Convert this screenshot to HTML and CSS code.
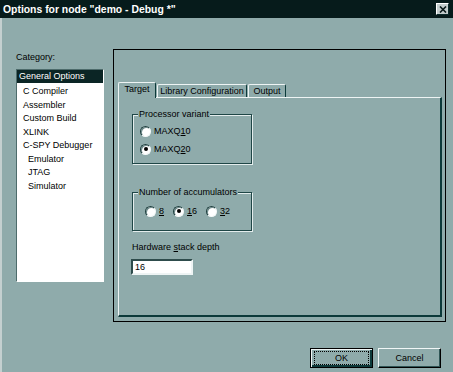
FILE: index.html
```html
<!DOCTYPE html>
<html>
<head>
<meta charset="utf-8">
<link rel="stylesheet" href="styles.css">
</head>
<body>
<div class="titlebar">
  <span class="title">Options for node "demo - Debug *"</span>
  <span class="close"><svg width="8" height="7" viewBox="0 0 8 7"><path d="M1 0.5 L7 6.5 M7 0.5 L1 6.5" stroke="#0a1a1a" stroke-width="1.6"/></svg></span>
</div>
<div class="client">
  <div class="main">
    <div class="left">
      <div class="cat-label">Category:</div>
      <ul class="list">
        <li class="item sel">General Options</li>
        <li class="item">C Compiler</li>
        <li class="item">Assembler</li>
        <li class="item">Custom Build</li>
        <li class="item">XLINK</li>
        <li class="item">C-SPY Debugger</li>
        <li class="item sub">Emulator</li>
        <li class="item sub">JTAG</li>
        <li class="item sub">Simulator</li>
      </ul>
    </div>
    <div class="frame">
      <div class="tabs">
        <div class="tab active tab-target">Target</div>
        <div class="tab tab-lib">Library Configuration</div>
        <div class="tab tab-out">Output</div>
      </div>
      <div class="panel">
        <div class="group g1">
          <span class="legend">Processor variant</span>
          <div class="radio"><span class="dot"></span><span>MAXQ<u>1</u>0</span></div>
          <div class="radio"><span class="dot on"></span><span>MAXQ<u>2</u>0</span></div>
        </div>
        <div class="group g2">
          <span class="legend">Number of accumulators</span>
          <div class="radio r-inline"><span class="dot"></span><span><u>8</u></span></div>
          <div class="radio r-inline"><span class="dot on"></span><span><u>1</u>6</span></div>
          <div class="radio r-inline"><span class="dot"></span><span><u>3</u>2</span></div>
        </div>
        <div class="field-label">Hardware <u>s</u>tack depth</div>
        <div class="textbox">16</div>
      </div>
    </div>
  </div>
  <div class="buttons">
    <div class="btn default"><span class="focus">OK</span></div>
    <div class="btn">Cancel</div>
  </div>
</div>
</body>
</html>
```
FILE: styles.css
```css
* { box-sizing: border-box; }
html, body { margin: 0; padding: 0; }
body {
  width: 453px;
  height: 372px;
  overflow: hidden;
  background: #8fabab;
  font-family: "Liberation Sans", Arial, sans-serif;
  font-size: 9px;
  color: #000;
}
u { text-decoration: underline; text-underline-offset: 1px; }

.titlebar {
  height: 18px;
  background: #061b1b;
  color: #fff;
  display: flex;
  align-items: center;
  justify-content: space-between;
  padding: 0 4px 0 3px;
}
.title { font-weight: bold; font-size: 10.4px; white-space: nowrap; }
.close {
  width: 13px;
  height: 12px;
  background: #c3cdcd;
  border: 1px solid;
  border-color: #fff #0a2a2a #0a2a2a #fff;
  display: flex;
  align-items: center;
  justify-content: center;
}

.client {
  height: 354px;
  border-left: 2px solid #c4d0d0;
  display: flex;
  flex-direction: column;
}
.main {
  display: flex;
  padding: 31px 0 0 14px;
}
.left { width: 88px; padding-top: 3px; }
.cat-label { height: 11px; line-height: 11px; }
.list {
  margin: 6px 0 0;
  padding: 0;
  list-style: none;
  background: #fff;
  height: 213px;
  border: 1px solid;
  border-color: #4d6b6b #fff #fff #4d6b6b;
}
.item {
  height: 13.5px;
  line-height: 13.5px;
  padding-left: 6px;
  white-space: nowrap;
}
.item.sel {
  background: #0b2525;
  color: #fff;
  padding-left: 2px;
  height: 13px;
  line-height: 13px;
  margin-bottom: 2px;
}
.item.sub { padding-left: 11px; }

.frame {
  margin-left: 9px;
  width: 333px;
  height: 273px;
  border: 1px solid #000;
  padding: 32px 3px 4px 4px;
}
.tabs {
  display: flex;
  align-items: flex-end;
  height: 15px;
}
.tab {
  height: 13px;
  line-height: 12px;
  text-align: center;
  white-space: nowrap;
  border-top: 1px solid #eef4f4;
  border-left: 1px solid #eef4f4;
  border-right: 1px solid #0c3a3a;
  border-radius: 2px 2px 0 0;
}
.tab.active {
  height: 16px;
  line-height: 13px;
  margin-bottom: -1px;
  position: relative;
  z-index: 1;
  background: #8fabab;
}
.tab-target { width: 38px; }
.tab-lib { width: 90px; margin-left: 1px; }
.tab-out { width: 38px; margin-left: 1px; }

.panel {
  width: 324px;
  height: 220px;
  border-style: solid;
  border-width: 1px 2px 2px 1px;
  border-color: #eef4f4 #0c3a3a #0c3a3a #eef4f4;
  padding: 16px 0 0 13px;
}
.group {
  position: relative;
  width: 120px;
  border: 1px solid #1f4646;
  box-shadow: 1px 1px 0 #e4eded, inset 1px 1px 0 #e4eded;
}
.legend {
  position: absolute;
  top: -6px;
  left: 5px;
  padding: 0 1px;
  line-height: 11px;
  background: #8fabab;
  white-space: nowrap;
}
.g1 { height: 50px; padding: 7px 0 0 7px; }
.g2 {
  height: 39px;
  margin-top: 28px;
  padding: 9px 0 0 12px;
  display: flex;
}
.radio {
  display: flex;
  align-items: center;
  height: 18px;
  gap: 3px;
}
.r-inline { margin-right: 9px; }
.dot {
  width: 11px;
  height: 11px;
  border-radius: 50%;
  background: #fff;
  border: 1px solid;
  border-color: #1e3e3e #f4f8f8 #f4f8f8 #1e3e3e;
  box-shadow: inset 1px 1px 0 #6f8c8c;
  display: flex;
  align-items: center;
  justify-content: center;
}
.dot.on::after {
  content: "";
  width: 4px;
  height: 4px;
  border-radius: 50%;
  background: #000;
}
.field-label { margin-top: 11px; line-height: 11px; }
.textbox {
  margin-top: 6px;
  margin-left: -1px;
  width: 62px;
  height: 16px;
  background: #fff;
  border: 2px solid;
  border-color: #2e4c4c #eef4f4 #eef4f4 #2e4c4c;
  padding-left: 2px;
  line-height: 12px;
}

.buttons {
  display: flex;
  justify-content: flex-end;
  gap: 5px;
  padding-right: 12px;
  margin-top: 26px;
}
.btn {
  width: 63px;
  height: 20px;
  display: flex;
  align-items: center;
  justify-content: center;
  background: #8fabab;
  border: 1px solid;
  border-color: #f0f6f6 #000 #000 #f0f6f6;
  box-shadow: inset -1px -1px 0 #2f5555;
}
.btn.default {
  border-color: #000;
  box-shadow: inset 1px 1px 0 #f0f6f6, inset -2px -2px 0 #0c3a3a;
}
.focus {
  width: 55px;
  height: 14px;
  border: 1px dotted #000;
  display: flex;
  align-items: center;
  justify-content: center;
}
```
